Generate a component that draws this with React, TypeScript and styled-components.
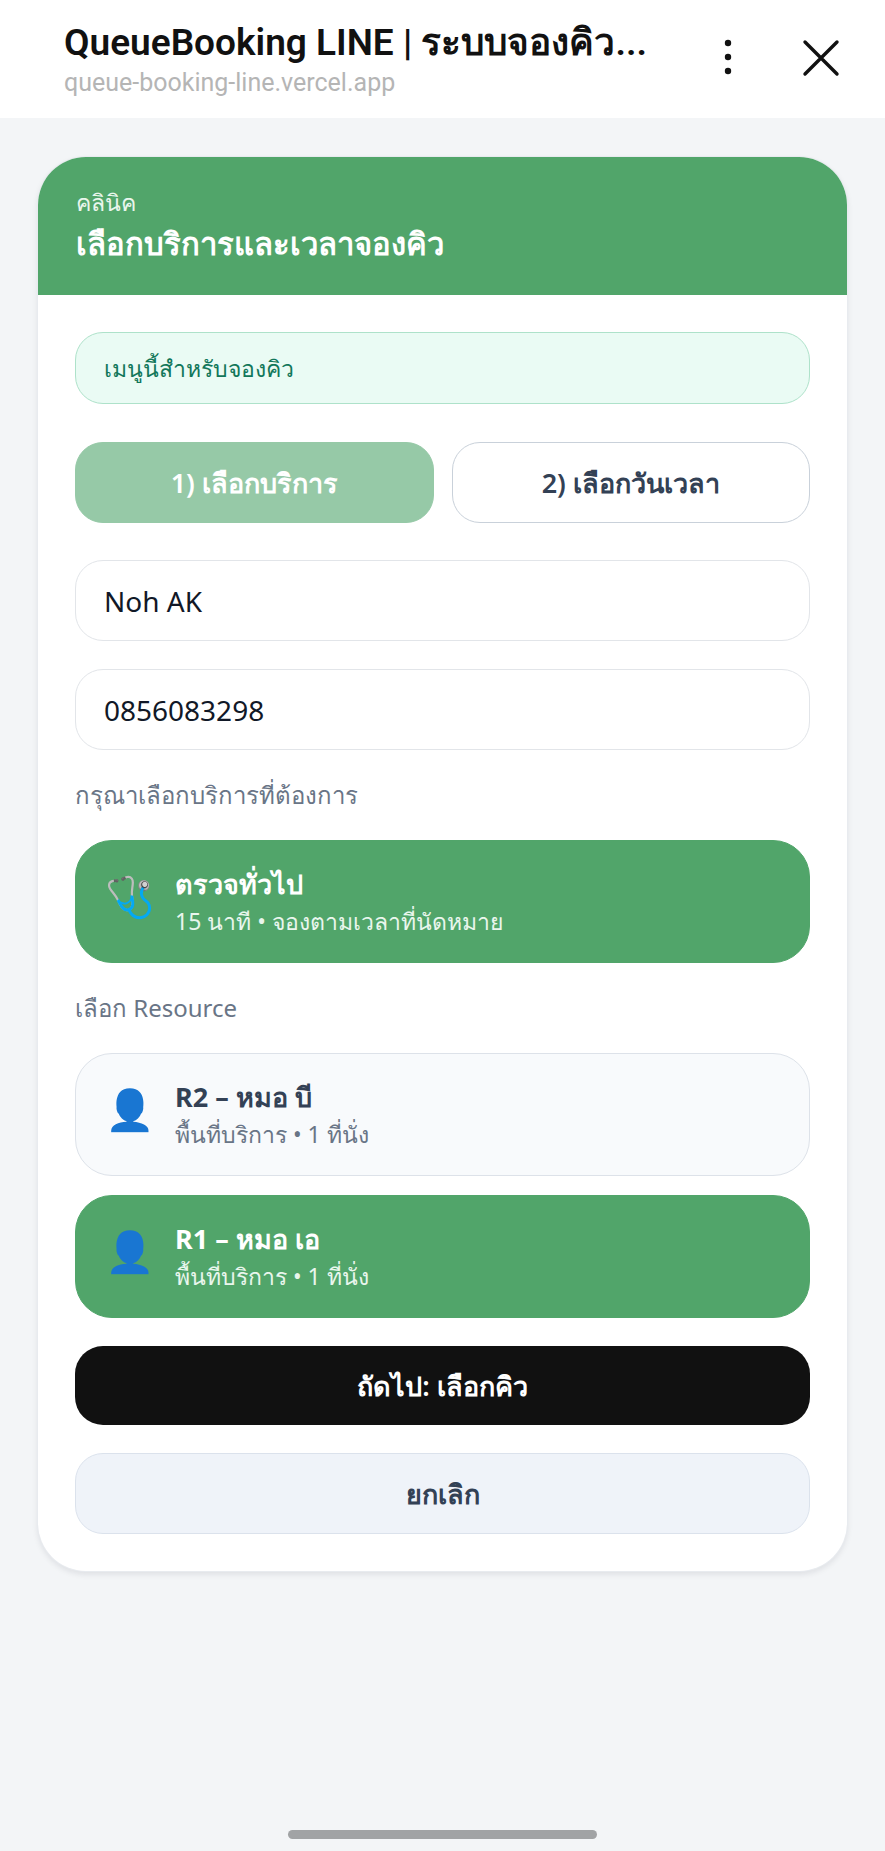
import React, { useState } from "react";
import styled, { createGlobalStyle, css } from "styled-components";

const GlobalStyle = createGlobalStyle`
  *, *::before, *::after { box-sizing: border-box; }
  body { margin: 0; background: #f3f5f7; }
  button, input { font: inherit; color: inherit; margin: 0; }
  button { cursor: pointer; }
  h1, h2, p { margin: 0; }
`;

const Page = styled.div`
  min-height: 100vh;
  display: flex;
  flex-direction: column;
  background: #f3f5f7;
  font-family: "Noto Sans", sans-serif;
  color: #334155;
`;

const BrowserBar = styled.header`
  display: flex;
  align-items: center;
  height: 118px;
  padding: 4px 40px 0 64px;
  background: #fff;
  font-family: Roboto, "Noto Sans", sans-serif;
`;

const PageInfo = styled.div`
  flex: 1;
  min-width: 0;
`;

const PageTitle = styled.h1`
  font-size: 37px;
  line-height: 44px;
  font-weight: 600;
  color: #111;
  white-space: nowrap;
`;

const PageUrl = styled.p`
  font-size: 25px;
  line-height: 36px;
  color: #b5b5b5;
`;

const BarActions = styled.div`
  display: flex;
  gap: 45px;
  padding-bottom: 6px;
`;

const BarButton = styled.button`
  display: flex;
  padding: 0;
  border: 0;
  background: none;
  color: #111;
`;

const Content = styled.main`
  padding: 39px 38px;
`;

const Card = styled.section`
  overflow: hidden;
  border-radius: 48px;
  background: #fff;
  box-shadow: 0 0 0 1px #e8ebef, 0 3px 6px rgba(15, 23, 42, 0.1);
`;

const CardHeader = styled.div`
  padding: 28px 38px;
  background: #51a56a;
  color: #fff;
`;

const Category = styled.p`
  font-size: 23px;
  line-height: 34px;
  color: #e9f6ed;
`;

const Heading = styled.h2`
  font-size: 31px;
  line-height: 48px;
  font-weight: 700;
`;

const CardBody = styled.div`
  display: flex;
  flex-direction: column;
  gap: 28px;
  padding: 37px;
`;

const Intro = styled.div`
  display: flex;
  flex-direction: column;
  gap: 38px;
  margin-bottom: 9px;
`;

const Notice = styled.p`
  padding: 18px 28px;
  border: 1px solid #aee2ca;
  border-radius: 28px;
  background: #eafbf4;
  color: #12775a;
  font-size: 23px;
  line-height: 34px;
`;

const Steps = styled.div`
  display: grid;
  grid-template-columns: 1fr 1fr;
  gap: 18px;
`;

const actionShape = css`
  width: 100%;
  border-radius: 28px;
  padding: 18px 28px;
  font-size: 27px;
  line-height: 43px;
`;

const Step = styled.button<{ $current?: boolean }>`
  ${actionShape}
  border: 1px solid ${(p) => (p.$current ? "#96c9a7" : "#c9d1da")};
  background: ${(p) => (p.$current ? "#96c9a7" : "#fff")};
  color: ${(p) => (p.$current ? "#fff" : "#334155")};
  font-weight: 600;
`;

const Field = styled.input`
  ${actionShape}
  height: 81px;
  border: 1px solid #e2e5e9;
  background: #fff;
  color: #111827;
  font-size: 28px;
`;

const Label = styled.p`
  font-size: 24px;
  line-height: 34px;
  color: #697586;
`;

const Options = styled.div`
  display: flex;
  flex-direction: column;
  gap: 19px;
`;

const Option = styled.button<{ $selected: boolean }>`
  display: flex;
  align-items: flex-start;
  gap: 20px;
  width: 100%;
  padding: 23px 29px;
  border: 1px solid ${(p) => (p.$selected ? "#51a56a" : "#dde2e9")};
  border-radius: 37px;
  background: ${(p) => (p.$selected ? "#51a56a" : "#f8fafc")};
  color: ${(p) => (p.$selected ? "#fff" : "#334155")};
  text-align: left;
`;

const OptionIcon = styled.span`
  width: 50px;
  font-size: 40px;
  line-height: 64px;
`;

const OptionText = styled.span`
  display: flex;
  flex-direction: column;
`;

const OptionName = styled.span`
  font-size: 27px;
  line-height: 40px;
  font-weight: 700;
`;

const OptionDetail = styled.span<{ $selected: boolean }>`
  font-size: 23px;
  line-height: 35px;
  color: ${(p) => (p.$selected ? "#e9f6ed" : "#697586")};
`;

const NextButton = styled.button`
  ${actionShape}
  border: 0;
  background: #111;
  color: #fff;
  font-weight: 600;
`;

const CancelButton = styled.button`
  ${actionShape}
  border: 1px solid #dbe2ec;
  background: #eff3f9;
  font-weight: 600;
`;

const HomeArea = styled.footer`
  display: flex;
  justify-content: center;
  margin-top: auto;
  padding-bottom: 12px;
`;

const HomeIndicator = styled.div`
  width: 35%;
  height: 9px;
  border-radius: 5px;
  background: #a1a3a5;
`;

interface OptionRowProps {
  icon: string;
  name: string;
  detail: string;
  selected: boolean;
  onSelect?: () => void;
}

function OptionRow({ icon, name, detail, selected, onSelect }: OptionRowProps) {
  return (
    <Option type="button" $selected={selected} aria-pressed={selected} onClick={onSelect}>
      <OptionIcon aria-hidden="true">{icon}</OptionIcon>
      <OptionText>
        <OptionName>{name}</OptionName>
        <OptionDetail $selected={selected}>{detail}</OptionDetail>
      </OptionText>
    </Option>
  );
}

const resources = [
  { id: "R2", name: "R2 – หมอ บี" },
  { id: "R1", name: "R1 – หมอ เอ" },
];

export default function App() {
  const [name, setName] = useState("Noh AK");
  const [phone, setPhone] = useState("0856083298");
  const [resource, setResource] = useState("R1");

  return (
    <Page>
      <GlobalStyle />
      <BrowserBar>
        <PageInfo>
          <PageTitle>QueueBooking LINE | ระบบจองคิว...</PageTitle>
          <PageUrl>queue-booking-line.vercel.app</PageUrl>
        </PageInfo>
        <BarActions>
          <BarButton type="button" aria-label="เมนู">
            <svg width="48" height="48" viewBox="0 0 48 48" fill="currentColor">
              <circle cx="24" cy="9" r="3.2" />
              <circle cx="24" cy="23" r="3.2" />
              <circle cx="24" cy="37" r="3.2" />
            </svg>
          </BarButton>
          <BarButton type="button" aria-label="ปิด">
            <svg width="48" height="48" viewBox="0 0 48 48" fill="none" stroke="currentColor" strokeWidth="3.4" strokeLinecap="round">
              <path d="M8 8 40 40M40 8 8 40" />
            </svg>
          </BarButton>
        </BarActions>
      </BrowserBar>

      <Content>
        <Card>
          <CardHeader>
            <Category>คลินิค</Category>
            <Heading>เลือกบริการและเวลาจองคิว</Heading>
          </CardHeader>
          <CardBody>
            <Intro>
              <Notice>เมนูนี้สำหรับจองคิว</Notice>
              <Steps>
                <Step type="button" $current>1) เลือกบริการ</Step>
                <Step type="button">2) เลือกวันเวลา</Step>
              </Steps>
            </Intro>
            <Field aria-label="ชื่อ" value={name} onChange={(e) => setName(e.target.value)} />
            <Field aria-label="เบอร์โทร" type="tel" value={phone} onChange={(e) => setPhone(e.target.value)} />
            <Label>กรุณาเลือกบริการที่ต้องการ</Label>
            <OptionRow icon="🩺" name="ตรวจทั่วไป" detail="15 นาที • จองตามเวลาที่นัดหมาย" selected />
            <Label>เลือก Resource</Label>
            <Options>
              {resources.map((r) => (
                <OptionRow
                  key={r.id}
                  icon="👤"
                  name={r.name}
                  detail="พื้นที่บริการ • 1 ที่นั่ง"
                  selected={resource === r.id}
                  onSelect={() => setResource(r.id)}
                />
              ))}
            </Options>
            <NextButton type="button">ถัดไป: เลือกคิว</NextButton>
            <CancelButton type="button">ยกเลิก</CancelButton>
          </CardBody>
        </Card>
      </Content>

      <HomeArea>
        <HomeIndicator />
      </HomeArea>
    </Page>
  );
}
